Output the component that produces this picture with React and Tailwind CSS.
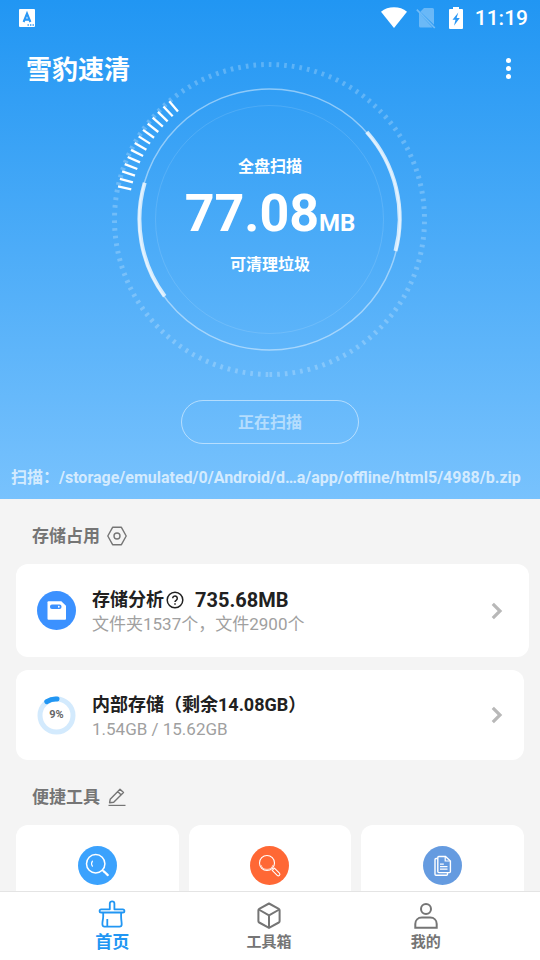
import React, { useState } from 'react';

// Status bar icons
const KeyboardIcon = () => (
  <svg className="h-[18px] w-4" viewBox="0 0 16 18">
    <rect width="16" height="18" rx="1" fill="#fff" />
    <path d="M4.6 13 8 4.6 11.4 13M5.8 10.6h4.4" fill="none" stroke="#2b98f5" strokeWidth="2.1" />
    <path d="M8.5 16h1.4M11 16h1.4M13.5 16h1.4" stroke="#2b98f5" strokeWidth="1.3" />
  </svg>
);

const WifiIcon = () => (
  <svg className="h-[22px] w-[26px]" viewBox="0 0 26 22">
    <path d="M13 21 0 4.700C3.600 1.800 8 .3 13 .3s9.400 1.500 13 4.400z" fill="#fff" />
  </svg>
);

const NoSimIcon = () => (
  <svg className="h-[21px] w-5" viewBox="0 0 20 21">
    <path d="M8 0h8.500a1.500 1.500 0 0 1 1.500 1.500v15.200L4.300 3.700zM3 5l13.500 14.500H4.500A1.500 1.500 0 0 1 3 18z" fill="#fff" opacity=".32" />
    <path d="M.8 1.700 18.800 20" stroke="#fff" strokeWidth="1.700" opacity=".35" />
  </svg>
);

const BatteryIcon = () => (
  <svg className="h-[22px] w-[14px]" viewBox="0 0 14 22">
    <path d="M4 0h6v2h3a1 1 0 0 1 1 1v18a1 1 0 0 1-1 1H1a1 1 0 0 1-1-1V3a1 1 0 0 1 1-1h3z" fill="#fff" />
    <path d="M9.300 5.500 3.500 12.800h3L5 18.800l5.800-7.800H7.600z" fill="#2b98f5" />
  </svg>
);

// Section heading icons
const HexagonIcon = () => (
  <svg className="h-5 w-5" viewBox="0 0 20 20" fill="none" stroke="#757575" strokeWidth="1.400">
    <path d="M5.600 1.300h8.800L19.200 10l-4.800 8.700H5.600L.8 10z" strokeLinejoin="round" />
    <circle cx="10" cy="10" r="3" />
  </svg>
);

const EditIcon = () => (
  <svg className="h-[18px] w-[18px]" viewBox="0 0 18 18" fill="none" stroke="#757575" strokeWidth="1.400">
    <path d="M2.200 11.300 12 1.200l3.500 3.400L5.700 14.300l-4.100.4zM9.700 3.500l3.500 3.400" strokeLinejoin="round" />
    <path d="M.5 17.400h17" strokeWidth="1.200" />
  </svg>
);

const HelpIcon = () => (
  <svg className="h-[18px] w-[18px]" viewBox="0 0 18 18" fill="none" stroke="#212121" strokeWidth="1.500">
    <circle cx="9" cy="9" r="7.800" />
    <path d="M6.700 7.300a2.300 2.300 0 1 1 3.700 1.800c-.9.6-1.400 1-1.400 2" />
    <path d="M9 12.200v1.600" />
  </svg>
);

const ChevronIcon = () => (
  <svg className="h-[18px] w-3 shrink-0" viewBox="0 0 12 18" fill="none" stroke="#b8b8b8" strokeWidth="3.200">
    <path d="M1.800 1.800 9 9l-7.200 7.200" />
  </svg>
);

const DiskIcon = () => (
  <svg className="h-[39px] w-[39px] shrink-0" viewBox="0 0 39 39">
    <circle cx="19.500" cy="19.500" r="19.500" fill="#3b91ff" />
    <path d="M11.500 10.200h12.800l4.700 4.500v13.100a1 1 0 0 1-1 1H11.500a1 1 0 0 1-1-1V11.200a1 1 0 0 1 1-1z" fill="#fff" />
    <rect x="13" y="13.500" width="11.500" height="4.500" rx="2" fill="#3b91ff" />
    <rect x="21" y="14.700" width="1.600" height="2" rx=".6" fill="#fff" />
  </svg>
);

const StorageRing = ({ percent }) => (
  <div className="grid shrink-0 place-items-center *:col-start-1 *:row-start-1">
    <svg className="h-[39px] w-[39px]" viewBox="0 0 39 39" fill="none" strokeWidth="5">
      <circle cx="19.500" cy="19.500" r="16.500" stroke="#d3eafd" />
      <path d="M9.800 5.600A16.500 16.500 0 0 1 20 3" stroke="#2196f3" strokeLinecap="round" />
    </svg>
    <span className="text-[11px] leading-4 font-bold text-[#666]">{percent}%</span>
  </div>
);

// Tool icons
const SearchToolIcon = () => (
  <svg className="h-[39px] w-[39px]" viewBox="0 0 39 39" fill="none" stroke="#fff" strokeLinecap="round">
    <circle cx="19.500" cy="19.500" r="19.500" fill="#3ba2fd" stroke="none" />
    <circle cx="17.700" cy="17.700" r="9.200" strokeWidth="1.500" />
    <path d="M14.400 15.200c-1 1.500-1 3.500 0 5" strokeWidth="1.200" />
    <path d="m24.300 24.300 1.800 1.800" strokeWidth="1.400" />
    <path d="m25.800 25.300 4 3.800" strokeWidth="2.200" />
  </svg>
);

const DeepCleanIcon = () => (
  <svg className="h-[39px] w-[39px]" viewBox="0 0 39 39" fill="none" stroke="#fff" strokeWidth="1.100">
    <circle cx="19.500" cy="19.500" r="19.500" fill="#ff6835" stroke="none" />
    <circle cx="17" cy="17" r="7.500" />
    <path d="M11 19a6.300 6.300 0 0 0 12 0" strokeWidth=".7" />
    <path d="m22.300 22.300 1 1M22.200 24.400l2.200-2.200 5 5a1.500 1.500 0 0 1-2.200 2.200z" strokeLinejoin="round" />
  </svg>
);

const DocumentIcon = () => (
  <svg className="h-[39px] w-[39px]" viewBox="0 0 39 39" fill="none" stroke="#fff" strokeWidth="1.400">
    <circle cx="19.500" cy="19.500" r="19.500" fill="#659be0" stroke="none" />
    <path d="M14.500 12.500H13a1 1 0 0 0-1 1v14.700a1 1 0 0 0 1 1h10.500a1 1 0 0 0 1-1v-1.500" />
    <path d="M15.800 10.500h6.700l4.900 4.500v10.600a1 1 0 0 1-1 1H15.800a1 1 0 0 1-1-1V11.500a1 1 0 0 1 1-1z" />
    <path d="M22.200 10.700V15h4.800M17 18.200h3.800M17 20.700h7.500M17 23.200h7.500" strokeWidth="1.200" />
  </svg>
);

// Bottom navigation icons
const BrushIcon = () => (
  <svg className="h-7 w-7 overflow-visible" viewBox="0 1 28 28" fill="none" stroke="currentColor" strokeWidth="1.800" strokeLinejoin="round">
    <path d="M11.800 9.300V3.600a2.300 2.300 0 0 1 4.600 0v5.700h8.400a1.500 1.500 0 0 1 0 3.200h-21.600a1.500 1.500 0 0 1 0-3.200z" />
    <path d="M5.200 12.500v4c0 3-1 5-.8 7.700.1 1.300 1 2.400 2.100 2.400h15c1.300 0 2.200-1.200 2.200-2.400 0-2-.6-4.700-.6-7.700v-4M9.300 26.500V19" />
  </svg>
);

const BoxIcon = () => (
  <svg className="h-7 w-7" viewBox="0 0 28 28" fill="none" stroke="currentColor" strokeWidth="2" strokeLinejoin="round">
    <path d="M14 2.500 23.800 7.900a1.500 1.500 0 0 1 .8 1.300v11a1.500 1.500 0 0 1-.8 1.300L14 26.900 4.200 21.500a1.500 1.500 0 0 1-.8-1.300v-11a1.500 1.500 0 0 1 .8-1.300z" />
    <path d="m3.700 8.500 10.300 5.900 10.300-5.900M14 14.400v12.100" />
  </svg>
);

const UserIcon = () => (
  <svg className="h-7 w-7" viewBox="0 0 28 28" fill="none" stroke="currentColor" strokeWidth="2">
    <circle cx="14" cy="8" r="5" />
    <path d="M3.300 26.800v-3.700c0-4 2.700-6.500 6.500-6.500h8.400c3.800 0 6.500 2.500 6.500 6.500v3.700z" />
  </svg>
);

const TICK_COUNT = 14;
const TICK_STEP = 2.877;

const ScanGauge = () => {
  const ticks = Array.from({ length: TICK_COUNT }, (_, i) => 12.3 + i * TICK_STEP);

  return (
    <svg className="h-80 w-80" viewBox="0 0 320 320" fill="none" stroke="#fff">
      {/* Outer dashes, starting at the bottom */}
      <path
        d="M159.500 314.500a155 155 0 0 0 0-310a155 155 0 0 0 0 310"
        strokeWidth="5"
        strokeDasharray="2.7 4.995"
        opacity=".23"
      />
      {ticks.map((angle) => (
        <path
          key={angle}
          d="M4.500 159.500h13.500"
          strokeWidth="2.300"
          transform={`rotate(${angle} 159.5 159.5)`}
        />
      ))}
      <circle cx="159.500" cy="159.500" r="130.500" strokeWidth="1.500" opacity=".45" />
      <circle cx="159.500" cy="159.500" r="114" strokeWidth="1" opacity=".12" />
      <path d="M256.800 72A130 130 0 0 1 285.500 191" strokeWidth="4" opacity=".75" />
      <path d="M34.700 122.700A130 130 0 0 0 54.700 236.300" strokeWidth="4" opacity=".75" />
    </svg>
  );
};

const StatusBar = () => (
  <div className="flex h-9 items-center justify-between pr-3 pl-[19px] text-white">
    <KeyboardIcon />
    <div className="flex items-center">
      <WifiIcon />
      <div className="ml-[9px]">
        <NoSimIcon />
      </div>
      <div className="ml-[13px]">
        <BatteryIcon />
      </div>
      <span className="ml-3 text-[21px] leading-6 font-medium">11:19</span>
    </div>
  </div>
);

const StorageRow = ({ icon, title, subtitle, className }) => (
  <button
    type="button"
    className={`flex w-full items-center rounded-xl bg-white pl-[21px] text-left ${className}`}
  >
    {icon}
    <div className="ml-4 flex-1 pt-[3px]">
      <div className="flex items-center text-lg leading-6 font-bold text-[#212121]">{title}</div>
      <div className="text-[17px] leading-6 text-[#a0a0a0]">{subtitle}</div>
    </div>
    <ChevronIcon />
  </button>
);

const tools = [
  { name: '搜索', icon: <SearchToolIcon /> },
  { name: '深度清理', icon: <DeepCleanIcon /> },
  { name: '文档', icon: <DocumentIcon /> },
];

const tabs = [
  { id: 'home', label: '首页', icon: <BrushIcon /> },
  { id: 'toolbox', label: '工具箱', icon: <BoxIcon /> },
  { id: 'mine', label: '我的', icon: <UserIcon /> },
];

const App = () => {
  const [activeTab, setActiveTab] = useState('home');

  return (
    <div className="flex h-dvh flex-col bg-[#f4f4f4] font-[Roboto,'Noto_Sans_CJK_SC',sans-serif]">
      <main className="min-h-0 flex-1 overflow-y-auto [scrollbar-width:none]">
        <header className="bg-linear-to-b/srgb from-[#2196f3] to-[#78c2fd] pb-[9px] text-white">
          <StatusBar />
          <div className="flex h-16 items-center justify-between pr-5 pl-[26px]">
            <h1 className="pt-[3px] text-[26px] leading-8 font-bold">雪豹速清</h1>
            <button type="button" aria-label="更多" className="flex w-6 flex-col items-center gap-[3px]">
              <span className="h-[5px] w-[5px] rounded-full bg-white" />
              <span className="h-[5px] w-[5px] rounded-full bg-white" />
              <span className="h-[5px] w-[5px] rounded-full bg-white" />
            </button>
          </div>

          {/* Scan gauge */}
          <div className="-mt-10 grid place-items-center *:col-start-1 *:row-start-1">
            <ScanGauge />
            <div className="flex flex-col items-center pb-2">
              <p className="text-base leading-6 font-bold">全盘扫描</p>
              <p className="mt-1 flex items-baseline font-bold">
                <span className="text-[52px] leading-[62px]">77.08</span>
                <span className="text-2xl">MB</span>
              </p>
              <p className="mt-2 text-base leading-6 font-bold">可清理垃圾</p>
            </div>
          </div>

          <div className="mt-5 flex justify-center">
            <button
              type="button"
              className="h-11 w-[178px] rounded-full border border-white/50 pt-0.5 text-base font-bold text-white/50"
            >
              正在扫描
            </button>
          </div>
          <p className="mt-[22px] truncate px-[11px] text-base leading-6 font-bold text-white/70">
            扫描：/storage/emulated/0/Android/d…a/app/offline/html5/4988/b.zip
          </p>
        </header>

        <section className="pt-6 pr-[11px] pl-4">
          <h2 className="flex items-center gap-[7px] pl-4 text-[17px] leading-[26px] font-bold text-[#757575]">
            存储占用
            <HexagonIcon />
          </h2>
          <div className="mt-[15px] flex flex-col gap-[13px]">
            <StorageRow
              className="h-[93px] pr-[26px]"
              icon={<DiskIcon />}
              title={
                <>
                  存储分析
                  <span className="ml-[2px]">
                    <HelpIcon />
                  </span>
                  <span className="ml-[11px] text-xl leading-6">735.68MB</span>
                </>
              }
              subtitle="文件夹1537个，文件2900个"
            />
            <div className="pr-[5px]">
              <StorageRow
                className="h-[90px] pr-[21px]"
                icon={<StorageRing percent={9} />}
                title="内部存储（剩余14.08GB）"
                subtitle="1.54GB / 15.62GB"
              />
            </div>
          </div>
        </section>

        <section className="px-4 pt-6">
          <h2 className="flex items-center gap-2 pl-4 text-[17px] leading-[26px] font-bold text-[#757575]">
            便捷工具
            <EditIcon />
          </h2>
          <div className="mt-[15px] grid grid-cols-3 gap-[10px]">
            {tools.map((tool) => (
              <button
                key={tool.name}
                type="button"
                aria-label={tool.name}
                className="flex h-[106px] justify-center rounded-xl bg-white pt-[21px]"
              >
                {tool.icon}
              </button>
            ))}
          </div>
        </section>
      </main>

      {/* Bottom navigation */}
      <nav className="grid h-[69px] shrink-0 grid-cols-3 border-t border-[#e4e4e4] bg-white pr-9 pl-[34px]">
        {tabs.map((tab) => (
          <button
            key={tab.id}
            type="button"
            onClick={() => setActiveTab(tab.id)}
            className={`flex flex-col items-center pt-[9px] font-bold ${
              activeTab === tab.id ? 'text-[17px] text-[#2196f3]' : 'text-[15px] text-[#757575]'
            }`}
          >
            {tab.icon}
            <span className="leading-[26px]">{tab.label}</span>
          </button>
        ))}
      </nav>
    </div>
  );
};

export default App;
